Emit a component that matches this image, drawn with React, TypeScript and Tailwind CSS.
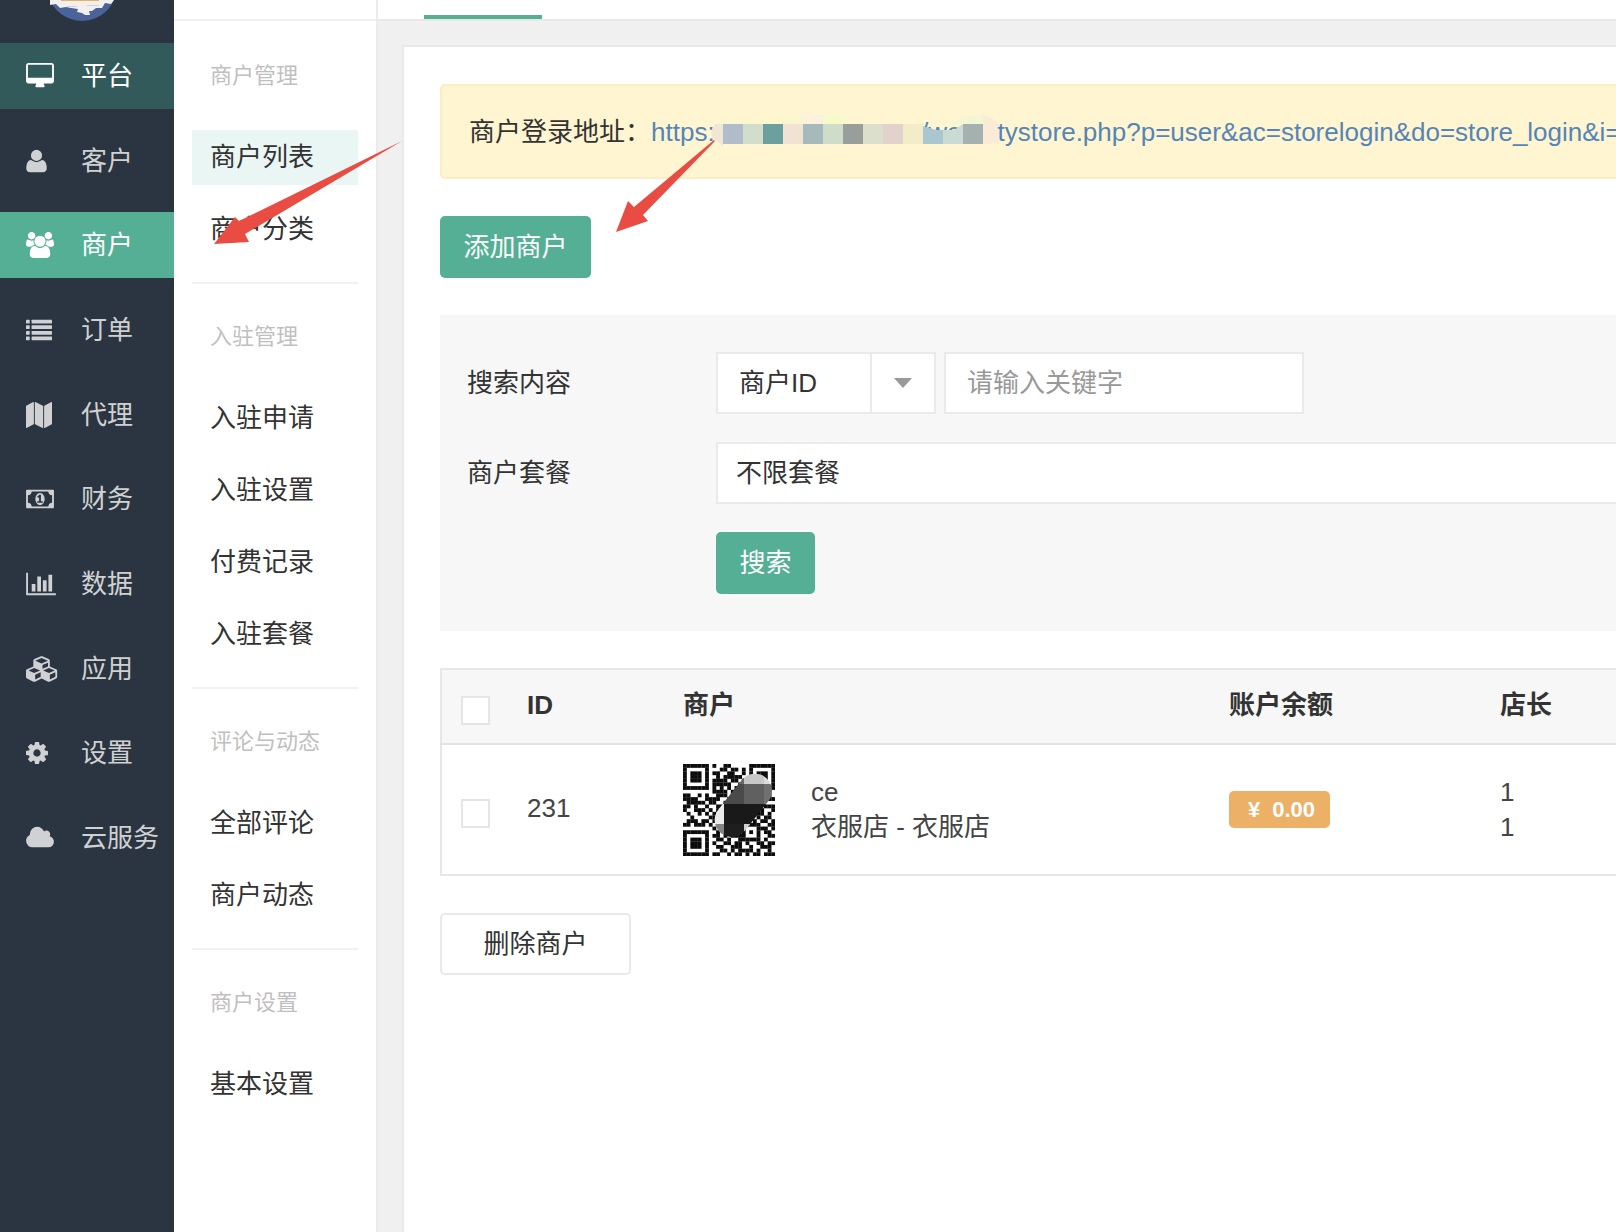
import type { ReactNode } from "react";
import clsx from "clsx";

type IconProps = { viewBox: string; width: number; children: ReactNode };

const Icon = ({ viewBox, width, children }: IconProps) => (
  <svg viewBox={viewBox} width={width} height={26} fill="currentColor" aria-hidden="true">
    {children}
  </svg>
);

const DesktopIcon = () => (
  <Icon viewBox="-64 0 1920 1792" width={28}>
    <path d="M1728 992v-832q0-13-9.5-22.5t-22.5-9.5h-1600q-13 0-22.5 9.5t-9.5 22.5v832q0 13 9.5 22.5t22.5 9.5h1600q13 0 22.5-9.5t9.5-22.5zm128-832v1088q0 66-47 113t-113 47h-544q0 37 16 77.5t32 71 16 43.5q0 26-19 45t-45 19h-512q-26 0-45-19t-19-45q0-14 16-44t32-70 16-78h-544q-66 0-113-47t-47-113v-1088q0-66 47-113t113-47h1600q66 0 113 47t47 113z" />
  </Icon>
);

const UserIcon = () => (
  <Icon viewBox="192 0 1408 1792" width={21}>
    <path d="M1600 1405q0 120-73 189.5t-194 69.5h-874q-121 0-194-69.5t-73-189.5q0-53 3.5-103.5t14-109 26.5-108.5 43-97.5 62-81 85.5-53.5 111.5-20q9 0 42 21.5t74.5 48 108 48 133.5 21.5 133.5-21.5 108-48 74.5-48 42-21.5q61 0 111.5 20t85.5 53.5 62 81 43 97.5 26.5 108.5 14 109 3.5 103.5zm-320-893q0 159-112.5 271.5t-271.5 112.5-271.5-112.5-112.5-271.5 112.5-271.5 271.5-112.5 271.5 112.5 112.5 271.5z" />
  </Icon>
);

const UsersIcon = () => (
  <Icon viewBox="64 0 1920 1792" width={28}>
    <path d="M657 896q-162 5-265 128h-134q-82 0-138-40.5t-56-118.5q0-353 124-353 6 0 43.5 21t97.5 42.5 119 21.5q67 0 133-23-5 37-5 66 0 139 81 256zm1071 637q0 120-73 189.5t-194 69.5h-874q-121 0-194-69.5t-73-189.5q0-53 3.5-103.5t14-109 26.5-108.5 43-97.5 62-81 85.5-53.5 111.5-20q10 0 43 21.5t73 48 107 48 135 21.5 135-21.5 107-48 73-48 43-21.5q61 0 111.5 20t85.5 53.5 62 81 43 97.5 26.5 108.5 14 109 3.5 103.5zm-1024-1277q0 106-75 181t-181 75-181-75-75-181 75-181 181-75 181 75 75 181zm704 384q0 159-112.5 271.5t-271.5 112.5-271.5-112.5-112.5-271.5 112.5-271.5 271.5-112.5 271.5 112.5 112.5 271.5zm576 225q0 78-56 118.5t-138 40.5h-134q-103-123-265-128 81-117 81-256 0-29-5-66 66 23 133 23 59 0 119-21.5t97.5-42.5 43.5-21q124 0 124 353zm-128-609q0 106-75 181t-181 75-181-75-75-181 75-181 181-75 181 75 75 181z" />
  </Icon>
);

const ListIcon = () => (
  <Icon viewBox="0 0 1792 1792" width={26}>
    {[192, 576, 960, 1344].map(y => (
      <g key={y}>
        <rect x="0" y={y} width="256" height="256" rx="32" />
        <rect x="384" y={y} width="1408" height="256" rx="32" />
      </g>
    ))}
  </Icon>
);

const MapIcon = () => (
  <Icon viewBox="0 0 1792 1792" width={26}>
    <path d="M512 0q13 0 22.5 9.5t9.5 22.5v1472q0 20-17 28l-480 256q-7 4-15 4-13 0-22.5-9.5t-9.5-22.5v-1472q0-20 17-28l480-256q7-4 15-4zm1248 0q13 0 22.5 9.5t9.5 22.5v1472q0 20-17 28l-480 256q-7 4-15 4-13 0-22.5-9.5t-9.5-22.5v-1472q0-20 17-28l480-256q7-4 15-4zm-1120 0q8 0 14 3l512 256q18 10 18 29v1472q0 13-9.5 22.5t-22.5 9.5q-8 0-14-3l-512-256q-18-10-18-29v-1472q0-13 9.5-22.5t22.5-9.5z" />
  </Icon>
);

const MoneyIcon = () => (
  <Icon viewBox="0 0 1920 1792" width={28}>
    <path d="M768 1152h384v-96h-128v-448h-114l-148 137 77 80q42-37 55-57h2v288h-128v96zm512-256q0 70-21 142t-59.5 134-101.5 101-138 39-138-39-101.5-101-59.5-134-21-142 21-142 59.5-134 101.5-101 138-39 138 39 101.5 101 59.5 134 21 142zm512 256v-512q-106 0-181-75t-75-181h-1152q0 106-75 181t-181 75v512q106 0 181 75t75 181h1152q0-106 75-181t181-75zm128-832v1152q0 26-19 45t-45 19h-1792q-26 0-45-19t-19-45v-1152q0-26 19-45t45-19h1792q26 0 45 19t19 45z" />
  </Icon>
);

const ChartIcon = () => (
  <Icon viewBox="0 0 2048 1792" width={30}>
    <path d="M640 896v512h-256v-512h256zm384-512v1024h-256v-1024h256zm1024 1152v128h-2048v-1536h128v1408h1920zm-640-896v768h-256v-768h256zm384-384v1152h-256v-1152h256z" />
  </Icon>
);

const CubesIcon = () => (
  <Icon viewBox="0 0 2304 1792" width={33}>
    <path d="M640 1632l384-192v-314l-384 164v342zm-64-454l404-173-404-173-404 173zm1088 454l384-192v-314l-384 164v342zm-64-454l404-173-404-173-404 173zm-448-293l384-165v-266l-384 164v267zm-64-379l441-189-441-189-441 189zm1088 518v416q0 36-19 67t-52 47l-448 224q-25 14-57 14t-57-14l-448-224q-4-2-7-4-2 2-7 4l-448 224q-25 14-57 14t-57-14l-448-224q-33-16-52-47t-19-67v-416q0-38 21.5-70t56.5-48l434-186v-400q0-38 21.5-70t56.5-48l448-192q23-10 50-10t50 10l448 192q35 16 56.5 48t21.5 70v400l434 186q36 16 57 48t21 70z" />
  </Icon>
);

const CogIcon = () => (
  <Icon viewBox="128 0 1536 1792" width={22}>
    <path d="M1152 896q0-106-75-181t-181-75-181 75-75 181 75 181 181 75 181-75 75-181zm512-109v222q0 12-8 23t-20 13l-185 28q-19 54-39 91 35 50 107 138 10 12 10 25t-9 23q-27 37-99 108t-94 71q-12 0-26-9l-138-108q-44 23-91 38-16 136-29 186-7 28-36 28h-222q-14 0-24.5-8.5t-11.5-21.5l-28-184q-49-16-90-37l-141 107q-10 9-25 9-14 0-25-11-126-114-165-168-7-10-7-23 0-12 8-23 15-21 51-66.5t54-70.5q-27-50-41-99l-183-27q-13-2-21-12.5t-8-23.5v-222q0-12 8-23t19-13l186-28q14-46 39-92-40-57-107-138-10-12-10-24 0-10 9-23 26-36 98.5-107.5t94.5-71.5q13 0 26 10l138 107q44-23 91-38 16-136 29-186 7-28 36-28h222q14 0 24.5 8.5t11.5 21.5l28 184q49 16 90 37l142-107q9-9 24-9 13 0 25 10 129 119 165 170 7 8 7 22 0 12-8 23-15 21-51 66.5t-54 70.5q26 50 41 98l183 28q13 2 21 12.5t8 23.5z" />
  </Icon>
);

const CloudIcon = () => (
  <Icon viewBox="0 0 1920 1792" width={28}>
    <path d="M1920 1152q0 159-112.5 271.5t-271.5 112.5h-1088q-185 0-316.5-131.5t-131.5-316.5q0-132 71-241.5t187-163.5q-2-28-2-43 0-212 150-362t362-150q158 0 286.5 88t187.5 230q70-62 166-62 106 0 181 75t75 181q0 75-41 138 129 30 213 134.5t84 239.5z" />
  </Icon>
);

const navItems = [
  { label: "平台", icon: <DesktopIcon />, className: "bg-[#335a5a] text-white" },
  { label: "客户", icon: <UserIcon />, className: "text-[#d0d1d2]" },
  { label: "商户", icon: <UsersIcon />, className: "bg-[#54af94] text-white" },
  { label: "订单", icon: <ListIcon />, className: "text-[#d0d1d2]" },
  { label: "代理", icon: <MapIcon />, className: "text-[#d0d1d2]" },
  { label: "财务", icon: <MoneyIcon />, className: "text-[#d0d1d2]" },
  { label: "数据", icon: <ChartIcon />, className: "text-[#d0d1d2]" },
  { label: "应用", icon: <CubesIcon />, className: "text-[#d0d1d2]" },
  { label: "设置", icon: <CogIcon />, className: "text-[#d0d1d2]" },
  { label: "云服务", icon: <CloudIcon />, className: "text-[#d0d1d2]" },
];

const menuGroups = [
  { title: "商户管理", items: ["商户列表", "商户分类"] },
  { title: "入驻管理", items: ["入驻申请", "入驻设置", "付费记录", "入驻套餐"] },
  { title: "评论与动态", items: ["全部评论", "商户动态"] },
  { title: "商户设置", items: ["基本设置"] },
];

const Sidebar = () => (
  <nav className="w-[174px] shrink-0 bg-[#2a3541]">
    <svg viewBox="0 0 70 21" width={70} height={21} className="ml-[47px]" aria-hidden="true">
      <circle cx="35" cy="-14" r="35" fill="#4a639a" />
      <path d="M3 0h64l-3 4-6-1-3 5-6 0-4 3-3 0 1 4-5 0-3-2-5-1 1-3-7-1-5-1-6 1-4-4-6 1z" fill="#f3efec" />
      <path d="M14 0h38v1H14z" fill="#e2b36a" />
      <path d="M20 6h10v1H20zM40 5h12v1H40z" fill="#c9d2e0" />
    </svg>
    <ul className="flex flex-col justify-between h-[828px] mt-[22px]">
      {navItems.map(item => (
        <li key={item.label}>
          <a href="#" className={clsx("flex items-center h-[66px] pl-[26px]", item.className)}>
            <span className="w-[55px]">{item.icon}</span>
            {item.label}
          </a>
        </li>
      ))}
    </ul>
  </nav>
);

const SubMenu = () => (
  <aside className="w-[204px] shrink-0 bg-white border-r-2 border-[#ebebeb]">
    <div className="h-[21px] border-b-2 border-[#f1f1f1]" />
    <div className="pt-0.5 px-[18px]">
      {menuGroups.map(group => (
        <section key={group.title} className="pt-[37px] pb-[25px] border-b-2 border-[#f1f1f1] last:border-b-0">
          <h2 className="pl-[18px] mb-[38px] text-[22px] leading-8 text-[#bfbfbf]">{group.title}</h2>
          <ul className="flex flex-col gap-[17px]">
            {group.items.map(item => (
              <li key={item}>
                <a
                  href="#"
                  className={clsx("block pl-[18px] leading-[55px]", item === "商户列表" && "bg-[#eaf6f3]")}
                >
                  {item}
                </a>
              </li>
            ))}
          </ul>
        </section>
      ))}
    </div>
  </aside>
);

const mosaic = [
  "#b1bcca",
  "#d2decb",
  "#6c9f9f",
  "#f1e3d3",
  "#a7babb",
  "#cfdcc9",
  "#989f9a",
  "#dddfcd",
  "#e3d1cb",
  "#f3ecc9",
];

// Hides the host part of the login address
const MaskedHost = () => (
  <svg viewBox="0 0 291 40" width={291} height={40} className="shrink-0 -mx-1" aria-hidden="true">
    <text x="210" y="29" fontSize="26" fill="currentColor">
      /web/
    </text>
    <path d="M4 12q12-8 30-6l60-2h45v8z" fill="#fbf6cc" />
    <path d="M92 2h20v10H92z" fill="#fbf1dc" />
    <path d="M112 3h20v9h-20z" fill="#f6facb" />
    <path d="M12 12H4q-6 8-2 14l10 8z" fill="#f0e6d5" />
    {mosaic.map((color, i) => (
      <rect key={i} x={12 + i * 20} y="12" width="20" height="20" fill={color} />
    ))}
    <path d="M212 14l13 4h7v14h-20z" fill="#aac6cf" />
    <path d="M232 18h11l9-6v20h-20z" fill="#c9dbd2" />
    <path d="M240 12q12-10 32-9v9z" fill="#f3f6d2" />
    <path d="M252 12h20v20h-20z" fill="#a5b1ae" />
    <path d="M272 3q14 3 17 12v12q-3 5-10 5h-7z" fill="#faebd7" />
  </svg>
);

const qrRows = [
  "1111111010011000001111111",
  "1000001000110110101000001",
  "1011101011001100101011101",
  "1011101001011111001011101",
  "1011101011110110101011101",
  "1000001011111001001000001",
  "1111111010101010101111111",
  "0000000011110101000000000",
  "1100101001110110111010110",
  "1111001111001011010110011",
  "0111110110010110101101000",
  "1101001001101011010010111",
  "1001110101011010110101001",
  "0100101010110101101011010",
  "0010000111010110011010110",
  "0111011011001011010101101",
  "1101110101011010111110011",
  "0000000010110101100011101",
  "1111111001001100101010110",
  "1000001011010111100010011",
  "1011101001101001111110100",
  "1011101010011011010011011",
  "1011101001100111001001110",
  "1000001000110101111010010",
  "1111111011001011010110111",
];

const QrCode = () => (
  <svg viewBox="0 0 92 92" width={92} height={92} className="shrink-0" role="img" aria-label="商户二维码">
    <g transform="scale(3.68)">
      {qrRows.map((row, y) =>
        row.split("").map((cell, x) =>
          cell === "1" ? <rect key={`${x}-${y}`} x={x} y={y} width="1.04" height="1.04" fill="#0c0c0c" /> : null,
        ),
      )}
    </g>
    <clipPath id="smudge">
      <path d="M85.3 37.3A17 17 0 1 0 58.7 16.1L35.4 45.4A17 17 0 1 0 62 66.6Z" />
    </clipPath>
    <g clipPath="url(#smudge)">
      <path d="M41 0h20v20H41z" fill="#6a6a6a" />
      <path d="M61 0h20v20H61z" fill="#c8c8c8" />
      <path d="M81 0h11v20H81z" fill="#dcdcdc" />
      <path d="M21 20h40v20H21z" fill="#4a4a4a" />
      <path d="M61 20h20v20H61z" fill="#606060" />
      <path d="M81 20h11v20H81z" fill="#707070" />
      <path d="M21 40h20v20H21z" fill="#ebebeb" />
      <path d="M41 40h51v20H41z" fill="#191919" />
      <path d="M21 60h20v20H21z" fill="#848484" />
      <path d="M41 60h20v20H41z" fill="#1e1e1e" />
      <path d="M61 60h20v20H61z" fill="#d0d0d0" />
    </g>
  </svg>
);

const SearchForm = () => (
  <form className="flex flex-col gap-7 mt-[37px] py-[37px] pl-[27px] bg-[#f7f7f7]">
    <div className="flex items-center">
      <label htmlFor="keyword" className="w-[249px] shrink-0">
        搜索内容
      </label>
      <div className="relative w-[220px]">
        <select
          aria-label="搜索类型"
          className="appearance-none block w-full h-[62px] pl-[21px] bg-white border-2 border-[#e9eaeb] outline-none"
        >
          <option>商户ID</option>
        </select>
        <span className="absolute top-0 right-0 flex items-center justify-center w-[66px] h-full border-2 border-[#e9eaeb] pointer-events-none">
          <svg viewBox="0 0 18 10" width={18} height={10} fill="#999" aria-hidden="true">
            <path d="M0 0h18L9 10z" />
          </svg>
        </span>
      </div>
      <input
        id="keyword"
        type="text"
        placeholder="请输入关键字"
        className="w-[360px] h-[62px] ml-2 px-[21px] bg-white border-2 border-[#e9eaeb] placeholder:text-[#999] outline-none"
      />
    </div>
    <div className="flex items-center">
      <label htmlFor="package" className="w-[249px] shrink-0">
        商户套餐
      </label>
      <select
        id="package"
        className="appearance-none grow h-[62px] pl-[18px] bg-white border-2 border-r-0 border-[#e9eaeb] outline-none"
      >
        <option>不限套餐</option>
      </select>
    </div>
    <button type="button" className="self-start w-[99px] h-[62px] ml-[249px] rounded-[5px] bg-[#54af94] text-white">
      搜索
    </button>
  </form>
);

const checkboxClass = "appearance-none block size-[29px] mt-2 bg-white border-2 border-[#e5e5e5]";

const MerchantTable = () => (
  <table className="w-full table-fixed mt-[37px] border-2 border-r-0 border-[#e7e7e7] text-left">
    <colgroup>
      <col className="w-[67px]" />
      <col className="w-[156px]" />
      <col className="w-[546px]" />
      <col className="w-[271px]" />
      <col />
    </colgroup>
    <thead className="bg-[#f7f7f7]">
      <tr className="h-[75px] border-b-2 border-[#e3e3e3]">
        <th className="pl-[19px]">
          <input type="checkbox" aria-label="全选" className={checkboxClass} />
        </th>
        <th className="pl-[19px] pb-1 font-bold">ID</th>
        <th className="pl-[19px] pb-1 font-bold">商户</th>
        <th className="pl-[19px] pb-1 font-bold">账户余额</th>
        <th className="pl-[19px] pb-1 font-bold">店长</th>
      </tr>
    </thead>
    <tbody>
      <tr className="h-[131px] text-[#444]">
        <td className="pl-[19px]">
          <input type="checkbox" aria-label="选择 231" className={checkboxClass} />
        </td>
        <td className="pl-[19px] pb-1">231</td>
        <td className="pl-[19px]">
          <div className="flex items-center gap-9">
            <QrCode />
            <div className="leading-[35px]">
              <p>ce</p>
              <p>衣服店 - 衣服店</p>
            </div>
          </div>
        </td>
        <td className="pl-[19px]">
          <span className="flex items-center justify-center gap-3 w-[101px] h-[37px] pl-1 rounded-[5px] bg-[#edb067] text-[22px] font-bold text-white">
            <span>¥</span>
            <span>0.00</span>
          </span>
        </td>
        <td className="pl-[19px] leading-[35px]">
          <p>1</p>
          <p>1</p>
        </td>
      </tr>
    </tbody>
  </table>
);

const Arrows = () => (
  <svg
    viewBox="0 0 520 120"
    width={520}
    height={120}
    fill="#e84c43"
    className="absolute top-[130px] left-[205px] pointer-events-none"
    aria-hidden="true"
  >
    <path d="M9 114L30 87l4 4L197 11 40 104l4 8z" />
    <path d="M411 102l12-31 6 6 80-67 1 1-72 74 5 6z" />
  </svg>
);

const App = () => {
  return (
    <div className="relative flex min-h-screen overflow-hidden bg-[#f0f0f0] font-['Liberation_Sans','Noto_Sans_CJK_SC',sans-serif] text-[26px] leading-9 text-[#333]">
      <Sidebar />
      <SubMenu />
      <main className="flex flex-col grow min-w-0">
        <div className="flex items-end h-[21px] pl-[46px] bg-white border-b-2 border-[#e8e8e8]">
          <div className="w-[118px] h-1 bg-[#54af94]" />
        </div>
        <div className="grow mt-6 ml-6 pt-[37px] pl-9 bg-white border-t-2 border-l-2 border-[#e9e9e9]">
          <div className="flex items-center h-[95px] pl-[27px] border-2 border-r-0 border-[#fdedc2] rounded-l-[5px] bg-[#fff5d1] whitespace-nowrap">
            <span>商户登录地址：</span>
            <a href="#" className="flex items-center text-[#5585b8]">
              <span>https:</span>
              <MaskedHost />
              <span>tystore.php?p=user&amp;ac=storelogin&amp;do=store_login&amp;i=</span>
            </a>
          </div>
          <button type="button" className="block w-[151px] h-[62px] mt-[37px] rounded-[5px] bg-[#54af94] text-white">
            添加商户
          </button>
          <SearchForm />
          <MerchantTable />
          <button type="button" className="block w-[191px] h-[62px] mt-[37px] border-2 border-[#e9e9e9] rounded-[5px]">
            删除商户
          </button>
        </div>
      </main>
      <Arrows />
    </div>
  );
};

export default App;
